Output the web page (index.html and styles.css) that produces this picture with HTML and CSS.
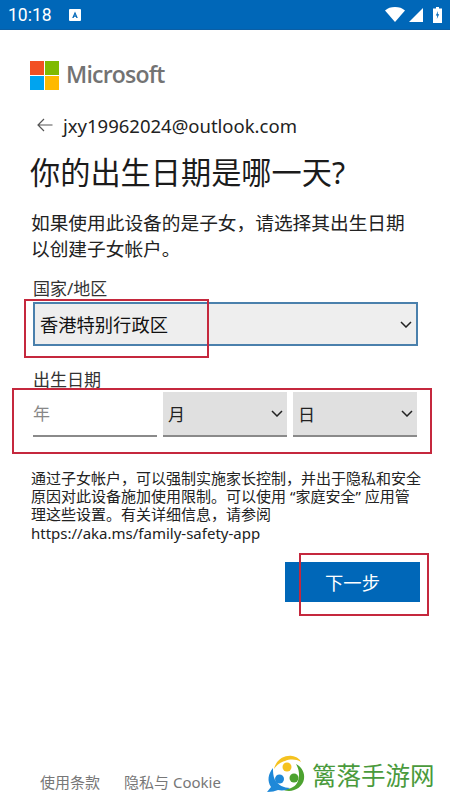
FILE: index.html
```html
<!DOCTYPE html>
<html lang="zh-CN">
<head>
  <meta charset="UTF-8">
  <meta name="viewport" content="width=device-width, initial-scale=1.0">
  <title>你的出生日期是哪一天?</title>
  <link rel="stylesheet" href="styles.css">
</head>
<body>
  <div class="statusbar">
    <span class="clock">10:18</span>
    <svg class="notif" width="12" height="12" viewBox="0 0 12 12"><rect width="12" height="12" rx="1" fill="#fff"/><path d="M3.2 9 6 2.6 8.800 9H7.400L6.900 7.700H5.100L4.600 9ZM5.500 6.600h1L6 5.200Z" fill="#0067b8"/></svg>
    <span class="status-icons">
      <svg width="20" height="15" viewBox="0 0 20 15"><path d="M0 3.400C2.600 1.200 6 0 10 0s7.400 1.200 10 3.400L10 15Z" fill="#fff"/></svg>
      <svg width="14" height="14" viewBox="0 0 14 14"><path d="M14 0V14H0Z" fill="#fff"/></svg>
      <svg class="battery" width="9" height="16" viewBox="0 0 9 16"><path d="M3 0h3v1.500h3V16H0V1.500h3Z" fill="#fff"/><path d="M5 4 2.800 8.500h1.500L3.800 12 6.200 7.300H4.700Z" fill="#0067b8"/></svg>
    </span>
  </div>

  <div class="content">
    <div class="logo">
      <div class="logo-squares">
        <i class="sq-red"></i><i class="sq-green"></i><i class="sq-blue"></i><i class="sq-yellow"></i>
      </div>
      <span class="logo-text">Microsoft</span>
    </div>

    <div class="identity">
      <svg width="16" height="14" viewBox="0 0 16 14"><path d="M15.500 7H1M7 1 1 7l6 6" fill="none" stroke="#555" stroke-width="1.200"/></svg>
      <span>jxy19962024@outlook.com</span>
    </div>

    <h1>你的出生日期是哪一天?</h1>
    <p class="intro">如果使用此设备的是子女，请选择其出生日期<br>以创建子女帐户。</p>

    <div class="fields">
      <div class="field-label">国家/地区</div>
      <div class="select country">
        <span>香港特别行政区</span>
        <svg width="12" height="7" viewBox="0 0 12 7"><path d="M1 1l5 5 5-5" fill="none" stroke="#222" stroke-width="1.500"/></svg>
      </div>

      <div class="field-label birth-label">出生日期</div>
      <div class="date-row">
        <div class="year">年</div>
        <div class="select date">
          <span>月</span>
          <svg width="12" height="7" viewBox="0 0 12 7"><path d="M1 1l5 5 5-5" fill="none" stroke="#222" stroke-width="1.500"/></svg>
        </div>
        <div class="select date">
          <span>日</span>
          <svg width="12" height="7" viewBox="0 0 12 7"><path d="M1 1l5 5 5-5" fill="none" stroke="#222" stroke-width="1.500"/></svg>
        </div>
      </div>
    </div>

    <p class="note">通过子女帐户，可以强制实施家长控制，并出于隐私和安全<br>原因对此设备施加使用限制。可以使用<span class="quoted">“家庭安全”</span>应用管<br>理这些设置。有关详细信息，请参阅<br>https://aka.ms/family-safety-app</p>

    <div class="actions">
      <button class="next">下一步</button>
    </div>
  </div>

  <div class="footer">
    <span>使用条款</span>
    <span>隐私与 Cookie</span>
  </div>

  <!-- red annotation boxes -->
  <div class="mark mark-country"></div>
  <div class="mark mark-date"></div>
  <div class="mark mark-next"></div>

  <div class="watermark">
    <svg width="38" height="38" viewBox="0 0 38 38">
      <path d="M7 14C9 5 17 0 25 1c4 .5 8 3 9 6-5-3-11-3-16-1-5 1.500-8 4-11 8Z" fill="#f5c21f"/>
      <path d="M29 9c6 3 9 9 8 15-1 7-8 12-15 12-3 0-5-1-7-2 7 1 14-2 16-8 2-6 1-12-2-17Z" fill="#4ca22f"/>
      <path d="M6 13C1 19 0 26 4 32l-4 5c5 0 8-1 11-2 5 1 9 0 12-2-6 0-12-3-15-8-2-4-2-8-2-12Z" fill="#1e88d8"/>
      <circle cx="20" cy="12" r="4.500" fill="#f5c21f"/>
      <circle cx="12.500" cy="24" r="4.500" fill="#1e88d8"/>
      <circle cx="27" cy="23" r="4.500" fill="#4ca22f"/>
    </svg>
    <span>篱落手游网</span>
  </div>
</body>
</html>
```

FILE: styles.css
```css
* { box-sizing: border-box; }
html, body { margin: 0; height: 800px; overflow: hidden; }
body { position: relative; background: #fff; color: #222; font-family: "Noto Sans", "Noto Sans CJK SC", sans-serif; }

.statusbar { height: 30px; background: #0067b8; border-bottom: 1px solid #0a5ea5; color: #fff; display: flex; align-items: center; padding: 0 8px; }
.clock { font-family: Roboto, sans-serif; font-size: 17.5px; width: 61px; }
.status-icons { margin-left: auto; display: flex; align-items: center; gap: 4px; }
.battery { margin-left: 6px; }

.content { padding: 30px 30px 0; }

.logo { display: flex; align-items: center; gap: 7px; height: 30px; }
.logo-squares { width: 29px; height: 29px; display: grid; grid-template-columns: 14px 14px; grid-template-rows: 14px 14px; gap: 1px; }
.sq-red { background: #f25022; }
.sq-green { background: #7fba00; }
.sq-blue { background: #00a4ef; }
.sq-yellow { background: #ffb900; }
.logo-text { font-family: "Open Sans", sans-serif; font-size: 23px; font-weight: 600; color: #737373; letter-spacing: -0.8px; margin-top: -2px; }

.identity { display: flex; align-items: center; gap: 10px; margin: 20px 0 0 7px; height: 30px; font-size: 18.5px; color: #222; }

h1 { margin: 13px 0 0; font-size: 30.2px; line-height: 40px; font-weight: 400; color: #1b1b1b; }

.intro { margin: 17px 0 0 1px; font-size: 18.7px; line-height: 26px; }

.fields { padding-left: 3px; }
.field-label { font-size: 17px; line-height: 24px; margin-top: 15px; color: #333; }
.birth-label { margin-top: 22px; }

.select { display: flex; align-items: center; justify-content: space-between; background: #e0e0e0; }
.country { width: 385px; height: 44px; margin-top: 1px; padding: 0 4px 0 5px; background: #eee; border: 2px solid #4a80ac; font-size: 18.3px; color: #111; }
.date-row { display: grid; grid-template-columns: repeat(3, 124px); gap: 6px; height: 45px; }
.date-row > div { height: 45px; border-bottom: 2px solid #8a8a8a; }
.date { padding: 0 4px 0 5px; font-size: 17px; }
.year { font-size: 17px; line-height: 44px; color: #888; }

.note { margin: 32px 0 0 1px; font-size: 15px; line-height: 18.2px; color: #222; white-space: nowrap; }
.quoted { padding: 0 4px; }

.actions { display: flex; justify-content: flex-end; margin-top: 20px; }
.next { width: 135px; height: 40px; border: none; background: #0067b8; color: #fff; font-family: inherit; font-size: 18.3px; padding: 0; }

.footer { position: absolute; left: 40px; top: 771px; display: flex; gap: 24px; font-size: 15px; line-height: 22px; color: #777; }

.mark { position: absolute; border: 2px solid #c5283d; }
.mark-country { left: 24px; top: 299px; width: 185px; height: 59px; }
.mark-date { left: 12px; top: 388px; width: 420px; height: 66px; }
.mark-next { left: 299px; top: 553px; width: 130px; height: 63px; }

.watermark { position: absolute; left: 267px; top: 755px; display: flex; align-items: center; gap: 7px; font-size: 24.5px; color: #4a9a3c; }
```
